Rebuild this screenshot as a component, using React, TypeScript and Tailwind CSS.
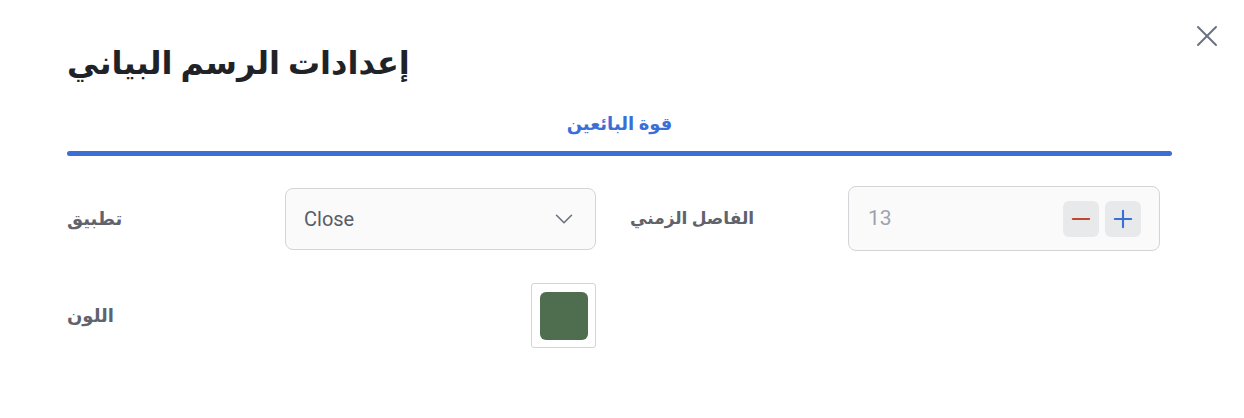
import { ChevronDown, Minus, Plus, X } from "lucide-react";

export default function App() {
  return (
    <div className="relative w-[1244px] h-[418px] bg-white font-['Roboto','Noto_Sans','DejaVu_Sans',sans-serif]">
      <button className="absolute right-[19px] top-[18px] text-gray-500">
        <X size={36} strokeWidth={1.3} />
      </button>

      <div className="px-[67px] pt-[38px] pr-[72px]">
        <h1 className="text-[32px] font-bold text-[#1f2328] leading-[50px]">إعدادات الرسم البياني</h1>

        <div className="mt-[23px] flex flex-col items-center">
          <span className="text-[18px] font-semibold text-[#3b6fd6] leading-[26px]">قوة البائعين</span>
          <div className="mt-[14px] h-[5px] w-full rounded-full bg-[#3b6fd6]" />
        </div>

        <div className="mt-[30px] flex items-center">
          <div className="w-[218px] text-[18px] font-semibold text-[#5f636b]">تطبيق</div>
          <div className="w-[311px] h-[62px] rounded-lg border border-[#d4d4d8] bg-[#fafafa] flex items-center justify-between pl-[18px] pr-[16px]">
            <span className="text-[20px] text-[#585d66]">Close</span>
            <ChevronDown size={30} strokeWidth={1.3} className="text-[#6b7280]" />
          </div>
          <div className="w-[34px]" />
          <div className="w-[218px] text-[17px] font-semibold text-[#5f636b]">الفاصل الزمني</div>
          <div className="w-[312px] h-[65px] rounded-lg border border-[#d4d4d8] bg-[#fafafa] flex items-center justify-between pl-[19px] pr-[18px]">
            <span className="text-[21px] text-[#9ca3af]">13</span>
            <div className="flex gap-[6px]">
              <div className="w-[36px] h-[36px] rounded-md bg-[#e8e9eb] flex items-center justify-center">
                <Minus size={28} strokeWidth={1.8} className="text-[#c2452d]" />
              </div>
              <div className="w-[36px] h-[36px] rounded-md bg-[#e8e9eb] flex items-center justify-center">
                <Plus size={28} strokeWidth={1.8} className="text-[#3b6fd6]" />
              </div>
            </div>
          </div>
        </div>

        <div className="mt-[32px] flex items-center">
          <div className="w-[218px] text-[18px] font-semibold text-[#5f636b]">اللون</div>
          <div className="w-[311px] flex justify-end">
            <div className="w-[65px] h-[65px] rounded-[3px] border border-[#d4d4d8] bg-white flex items-center justify-center">
              <div className="w-[48px] h-[48px] rounded-md bg-[#4e6e4f]" />
            </div>
          </div>
        </div>
      </div>
    </div>
  );
}
